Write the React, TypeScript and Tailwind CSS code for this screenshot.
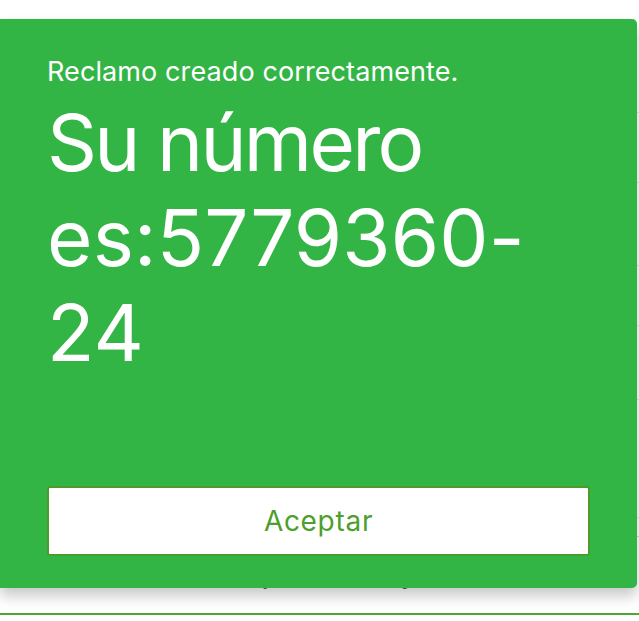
export default function App() {
  return (
    <div className="relative w-[639px] h-[621px] overflow-hidden bg-white font-['Inter','Liberation_Sans',sans-serif]">
      {/* list behind the dialog */}
      <div className="flex flex-col">
        <div className="h-[113px] border-b border-gray-200" />
        <div className="h-[70px] border-b border-gray-200" />
        <div className="h-[83px] border-b border-gray-200" />
        <div className="h-[60px] border-b border-gray-200" />
        <div className="h-[74px] border-b border-gray-200" />
        <div className="h-[118px] border-b border-gray-200" />
        <div className="h-[19px] border-b border-gray-300" />
        <div className="relative h-[76px]">
          <span className="absolute left-[264px] top-[18px] text-[26px] text-[#3f6e2c]">j</span>
          <span className="absolute left-[401px] top-[18px] text-[26px] text-[#3f6e2c]">y</span>
        </div>
        <div className="h-[2px] bg-[#4fa531]" />
      </div>

      {/* dialog */}
      <div className="absolute left-0 top-[19px] w-[637px] h-[569px] bg-[#33b546] rounded-r-[5px] shadow-[0_8px_14px_rgba(0,0,0,0.22)] flex flex-col px-[47px] pt-[36px] pb-[32px]">
        <p className="text-[27px] leading-[34px] text-white tracking-[0.1px]">Reclamo creado correctamente.</p>
        <p className="mt-[6px] text-[78px] leading-[95px] text-white">
          <span className="tracking-[-2.7px]">Su número</span>{" "}
          <span className="tracking-[0.2px]">es:5779360-24</span>
        </p>
        <button className="mt-auto h-[70px] w-full rounded-[3px] border-2 border-[#4c9c2c] bg-white text-[28px] tracking-[0.7px] text-[#4e9e2c]">
          Aceptar
        </button>
      </div>
    </div>
  );
}
